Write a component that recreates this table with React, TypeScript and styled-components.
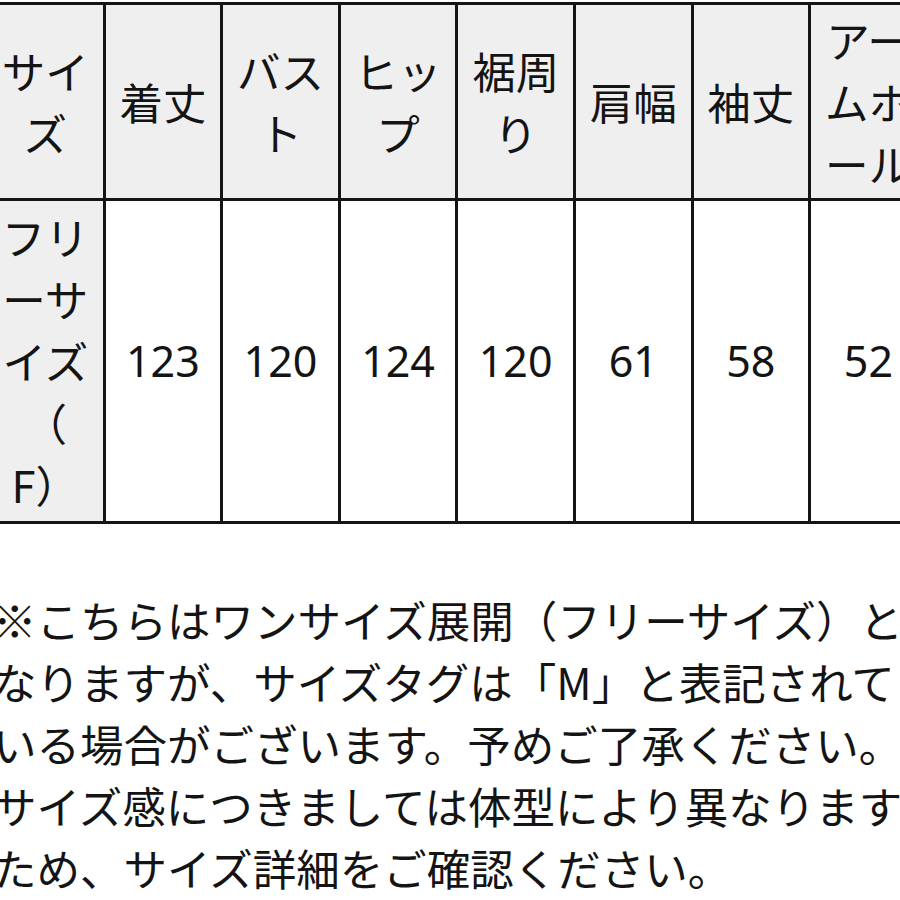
import React from "react";
import styled, { createGlobalStyle } from "styled-components";

const GlobalStyle = createGlobalStyle`
  html, body {
    margin: 0;
    padding: 0;
    background: #ffffff;
  }
  body {
    font-family: "Noto Sans CJK JP", "Noto Sans", sans-serif;
    color: #141414;
  }
`;

const Page = styled.div`
  width: 900px;
  height: 900px;
  overflow: hidden;
  background: #ffffff;
`;

const SizeTable = styled.div`
  display: grid;
  grid-template-columns: repeat(8, 114.6px);
  grid-template-rows: 193px 320px;
  gap: 3px;
  padding: 3px;
  width: max-content;
  margin: 2px 0 0 -15px;
  background: #151515;
`;

const Cell = styled.div<{ $shaded?: boolean }>`
  display: flex;
  align-items: center;
  justify-content: center;
  box-sizing: border-box;
  padding: 0 8px;
  text-align: center;
  background: ${(p) => (p.$shaded ? "#efefef" : "#ffffff")};
  font-size: 43.5px;
  line-height: 62px;
  line-break: loose;
  word-break: normal;
  overflow: hidden;
`;

const HeadCell = styled(Cell)`
  font-weight: 400;
`;

const ValueCell = styled(Cell)`
  font-family: "Noto Sans", "Noto Sans CJK JP", sans-serif;
  font-size: 43px;
`;

const CellText = styled.span`
  display: block;
  width: 100%;
`;

const Note = styled.p`
  margin: 0 0 0 -7px;
  width: 935px;
  font-size: 43.5px;
  line-height: 62px;
  color: #141414;
  line-break: loose;
`;

const Notes = styled.div`
  margin-top: 65px;
`;

const headers = ["サイズ", "着丈", "バスト", "ヒップ", "裾周り", "肩幅", "袖丈", "アームホール"];
const values = ["123", "120", "124", "120", "61", "58", "52"];

export default function App() {
  return (
    <Page lang="ja">
      <GlobalStyle />
      <SizeTable role="table">
        {headers.map((h) => (
          <HeadCell key={h} $shaded role="columnheader">
            <CellText>{h}</CellText>
          </HeadCell>
        ))}
        <Cell $shaded role="rowheader">
          <CellText>
            フリーサイズ（
            <br />
            F）
          </CellText>
        </Cell>
        {values.map((v, i) => (
          <ValueCell key={i} role="cell">
            {v}
          </ValueCell>
        ))}
      </SizeTable>
      <Notes>
        <Note>
          ※こちらはワンサイズ展開（フリーサイズ）となりますが、サイズタグは「M」と表記されている場合がございます。予めご了承ください。
        </Note>
        <Note>サイズ感につきましては体型により異なりますため、サイズ詳細をご確認ください。</Note>
      </Notes>
    </Page>
  );
}
